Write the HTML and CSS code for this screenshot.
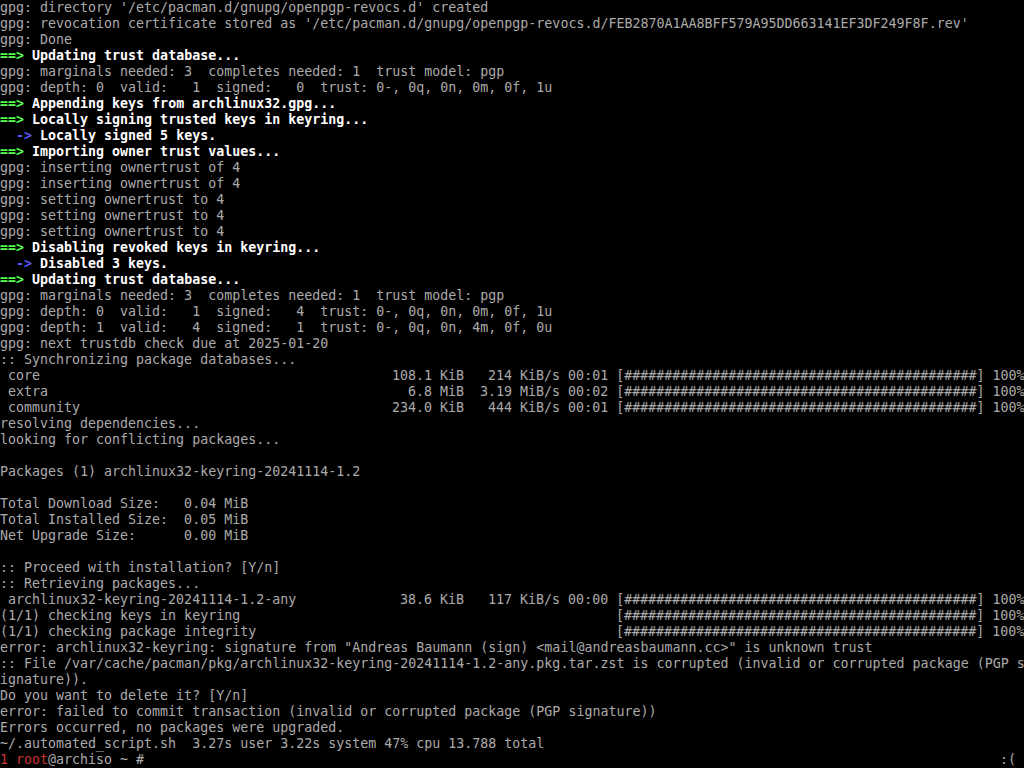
FILE: index.html
```html
<!DOCTYPE html>
<html>
<head>
<meta charset="utf-8">
<link rel="stylesheet" href="styles.css">
</head>
<body>
<main class="term">
<div class="ln">gpg: directory '/etc/pacman.d/gnupg/openpgp-revocs.d' created</div>
<div class="ln">gpg: revocation certificate stored as '/etc/pacman.d/gnupg/openpgp-revocs.d/FEB2870A1AA8BFF579A95DD663141EF3DF249F8F.rev'</div>
<div class="ln">gpg: Done</div>
<div class="ln b"><span class="g">==&gt;</span> Updating trust database...</div>
<div class="ln">gpg: marginals needed: 3  completes needed: 1  trust model: pgp</div>
<div class="ln">gpg: depth: 0  valid:   1  signed:   0  trust: 0-, 0q, 0n, 0m, 0f, 1u</div>
<div class="ln b"><span class="g">==&gt;</span> Appending keys from archlinux32.gpg...</div>
<div class="ln b"><span class="g">==&gt;</span> Locally signing trusted keys in keyring...</div>
<div class="ln b">  <span class="bl">-&gt;</span> Locally signed 5 keys.</div>
<div class="ln b"><span class="g">==&gt;</span> Importing owner trust values...</div>
<div class="ln">gpg: inserting ownertrust of 4</div>
<div class="ln">gpg: inserting ownertrust of 4</div>
<div class="ln">gpg: setting ownertrust to 4</div>
<div class="ln">gpg: setting ownertrust to 4</div>
<div class="ln">gpg: setting ownertrust to 4</div>
<div class="ln b"><span class="g">==&gt;</span> Disabling revoked keys in keyring...</div>
<div class="ln b">  <span class="bl">-&gt;</span> Disabled 3 keys.</div>
<div class="ln b"><span class="g">==&gt;</span> Updating trust database...</div>
<div class="ln">gpg: marginals needed: 3  completes needed: 1  trust model: pgp</div>
<div class="ln">gpg: depth: 0  valid:   1  signed:   4  trust: 0-, 0q, 0n, 0m, 0f, 1u</div>
<div class="ln">gpg: depth: 1  valid:   4  signed:   1  trust: 0-, 0q, 0n, 4m, 0f, 0u</div>
<div class="ln">gpg: next trustdb check due at 2025-01-20</div>
<div class="ln">:: Synchronizing package databases...</div>
<div class="ln"><span class="pname"> core</span>108.1 KiB   214 KiB/s 00:01 [############################################] 100%</div>
<div class="ln"><span class="pname"> extra</span>  6.8 MiB  3.19 MiB/s 00:02 [############################################] 100%</div>
<div class="ln"><span class="pname"> community</span>234.0 KiB   444 KiB/s 00:01 [############################################] 100%</div>
<div class="ln">resolving dependencies...</div>
<div class="ln">looking for conflicting packages...</div>
<div class="ln"></div>
<div class="ln">Packages (1) archlinux32-keyring-20241114-1.2</div>
<div class="ln"></div>
<div class="ln">Total Download Size:   0.04 MiB</div>
<div class="ln">Total Installed Size:  0.05 MiB</div>
<div class="ln">Net Upgrade Size:      0.00 MiB</div>
<div class="ln"></div>
<div class="ln">:: Proceed with installation? [Y/n]</div>
<div class="ln">:: Retrieving packages...</div>
<div class="ln"><span class="pname"> archlinux32-keyring-20241114-1.2-any</span> 38.6 KiB   117 KiB/s 00:00 [############################################] 100%</div>
<div class="ln"><span class="cname">(1/1) checking keys in keyring</span>[############################################] 100%</div>
<div class="ln"><span class="cname">(1/1) checking package integrity</span>[############################################] 100%</div>
<div class="ln">error: archlinux32-keyring: signature from "Andreas Baumann (sign) &lt;mail@andreasbaumann.cc&gt;" is unknown trust</div>
<div class="ln">:: File /var/cache/pacman/pkg/archlinux32-keyring-20241114-1.2-any.pkg.tar.zst is corrupted (invalid or corrupted package (PGP s</div>
<div class="ln">ignature)).</div>
<div class="ln">Do you want to delete it? [Y/n]</div>
<div class="ln">error: failed to commit transaction (invalid or corrupted package (PGP signature))</div>
<div class="ln">Errors occurred, no packages were upgraded.</div>
<div class="ln">~/.automated_script.sh  3.27s user 3.22s system 47% cpu 13.788 total</div>
<div class="ln prompt"><span><span class="r">1</span> <span class="r">root</span>@archiso ~ #</span><span class="rp">:(</span></div>
</main>
</body>
</html>
```
FILE: styles.css
```css
html, body {
  margin: 0;
  padding: 0;
  background: #000;
}
.term {
  width: 1024px;
  height: 768px;
  overflow: hidden;
  font-family: "DejaVu Sans Mono", "Liberation Mono", monospace;
  font-size: 13.3px;
  color: #aaaaaa;
}
.ln {
  height: 16px;
  line-height: 16px;
  white-space: pre;
}
.b {
  color: #ffffff;
  font-weight: bold;
}
.g {
  color: #55ff55;
}
.bl {
  color: #5555ff;
}
.r {
  color: #cc3333;
}
.pname {
  display: inline-block;
  width: 392px;
}
.cname {
  display: inline-block;
  width: 616px;
}
.prompt {
  display: flex;
  justify-content: space-between;
  padding-right: 8px;
}
```
